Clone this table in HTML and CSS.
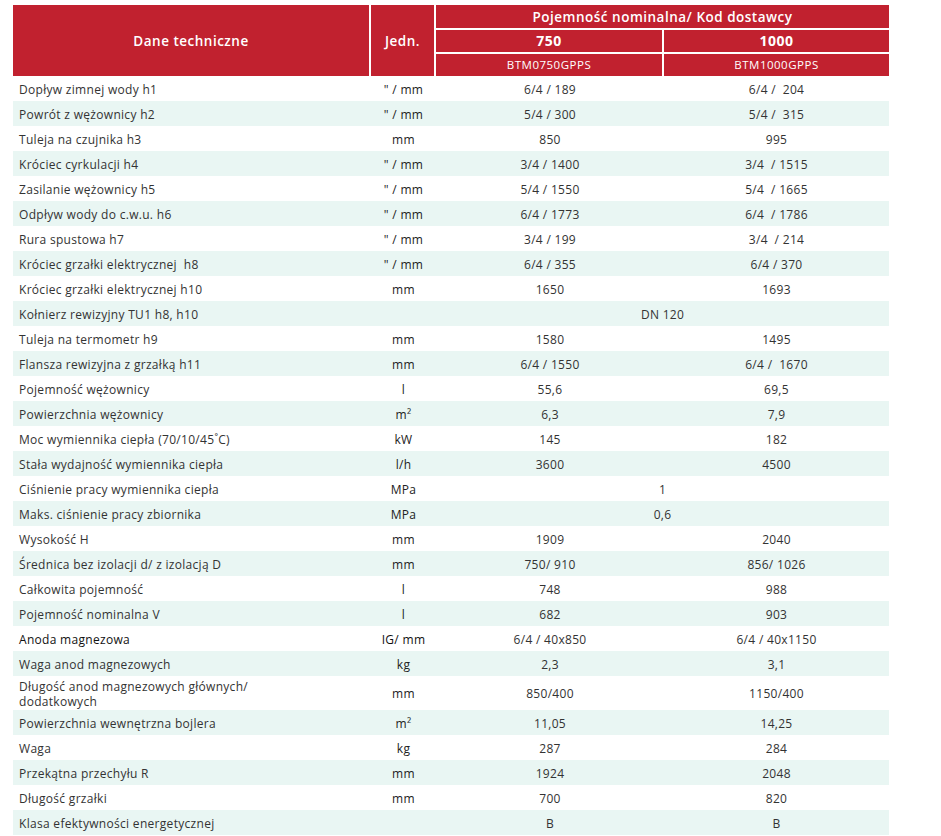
FILE: index.html
```html
<!DOCTYPE html>
<html lang="pl">
<head>
<meta charset="utf-8">
<title>Dane techniczne</title>
<link rel="stylesheet" href="styles.css">
</head>
<body>
<table class="spec">
  <colgroup>
    <col class="c-name">
    <col class="c-unit">
    <col class="c-val">
    <col class="c-val2">
  </colgroup>
  <thead>
    <tr class="h1">
      <th rowspan="3" class="hname bl">Dane techniczne</th>
      <th rowspan="3" class="hunit bl">Jedn.</th>
      <th colspan="2" class="htop bb">Pojemność nominalna/ Kod dostawcy</th>
    </tr>
    <tr class="h2">
      <th class="hcap bl bb">750</th>
      <th class="hcap bb">1000</th>
    </tr>
    <tr class="h3">
      <th class="hcode bl">BTM0750GPPS</th>
      <th class="hcode">BTM1000GPPS</th>
    </tr>
  </thead>
  <tbody>
    <tr><td class="name">Dopływ zimnej wody h1</td><td class="unit">" / mm</td><td>6/4 / 189</td><td>6/4 /&nbsp; 204</td></tr>
    <tr><td class="name">Powrót z wężownicy h2</td><td class="unit">" / mm</td><td>5/4 / 300</td><td>5/4 /&nbsp; 315</td></tr>
    <tr><td class="name">Tuleja na czujnika h3</td><td class="unit">mm</td><td>850</td><td>995</td></tr>
    <tr><td class="name">Króciec cyrkulacji h4</td><td class="unit">" / mm</td><td>3/4 / 1400</td><td>3/4 &nbsp;/ 1515</td></tr>
    <tr><td class="name">Zasilanie wężownicy h5</td><td class="unit">" / mm</td><td>5/4 / 1550</td><td>5/4 &nbsp;/ 1665</td></tr>
    <tr><td class="name">Odpływ wody do c.w.u. h6</td><td class="unit">" / mm</td><td>6/4 / 1773</td><td>6/4 &nbsp;/ 1786</td></tr>
    <tr><td class="name">Rura spustowa h7</td><td class="unit">" / mm</td><td>3/4 / 199</td><td>3/4 &nbsp;/ 214</td></tr>
    <tr><td class="name">Króciec grzałki elektrycznej &nbsp;h8</td><td class="unit">" / mm</td><td>6/4 / 355</td><td>6/4 / 370</td></tr>
    <tr><td class="name">Króciec grzałki elektrycznej h10</td><td class="unit">mm</td><td>1650</td><td>1693</td></tr>
    <tr><td class="name">Kołnierz rewizyjny TU1 h8, h10</td><td class="unit"></td><td colspan="2">DN 120</td></tr>
    <tr><td class="name">Tuleja na termometr h9</td><td class="unit">mm</td><td>1580</td><td>1495</td></tr>
    <tr><td class="name">Flansza rewizyjna z grzałką h11</td><td class="unit">mm</td><td>6/4 / 1550</td><td>6/4 /&nbsp; 1670</td></tr>
    <tr><td class="name">Pojemność wężownicy</td><td class="unit">l</td><td>55,6</td><td>69,5</td></tr>
    <tr><td class="name">Powierzchnia wężownicy</td><td class="unit">m²</td><td>6,3</td><td>7,9</td></tr>
    <tr><td class="name">Moc wymiennika ciepła (70/10/45˚C)</td><td class="unit">kW</td><td>145</td><td>182</td></tr>
    <tr><td class="name">Stała wydajność wymiennika ciepła</td><td class="unit">l/h</td><td>3600</td><td>4500</td></tr>
    <tr><td class="name">Ciśnienie pracy wymiennika ciepła</td><td class="unit">MPa</td><td colspan="2">1</td></tr>
    <tr><td class="name">Maks. ciśnienie pracy zbiornika</td><td class="unit">MPa</td><td colspan="2">0,6</td></tr>
    <tr><td class="name">Wysokość H</td><td class="unit">mm</td><td>1909</td><td>2040</td></tr>
    <tr><td class="name">Średnica bez izolacji d/ z izolacją D</td><td class="unit">mm</td><td>750/ 910</td><td>856/ 1026</td></tr>
    <tr><td class="name">Całkowita pojemność</td><td class="unit">l</td><td>748</td><td>988</td></tr>
    <tr><td class="name">Pojemność nominalna V</td><td class="unit">l</td><td>682</td><td>903</td></tr>
    <tr><td class="name dark">Anoda magnezowa</td><td class="unit dark">IG/ mm</td><td>6/4 / 40x850</td><td>6/4 / 40x1150</td></tr>
    <tr><td class="name">Waga anod magnezowych</td><td class="unit">kg</td><td>2,3</td><td>3,1</td></tr>
    <tr class="tall"><td class="name">Długość anod magnezowych głównych/<br>dodatkowych</td><td class="unit">mm</td><td>850/400</td><td>1150/400</td></tr>
    <tr><td class="name">Powierzchnia wewnętrzna bojlera</td><td class="unit">m²</td><td>11,05</td><td>14,25</td></tr>
    <tr><td class="name">Waga</td><td class="unit">kg</td><td>287</td><td>284</td></tr>
    <tr><td class="name">Przekątna przechyłu R</td><td class="unit">mm</td><td>1924</td><td>2048</td></tr>
    <tr><td class="name">Długość grzałki</td><td class="unit">mm</td><td>700</td><td>820</td></tr>
    <tr><td class="name">Klasa efektywności energetycznej</td><td class="unit"></td><td>B</td><td>B</td></tr>
  </tbody>
</table>
</body>
</html>
```

FILE: styles.css
```css
html, body {
  margin: 0;
  padding: 0;
  background: #ffffff;
}

body {
  padding: 5px 0 0 13px;
  font-family: "Open Sans", "DejaVu Sans", sans-serif;
  color: #333333;
}

.spec {
  width: 876px;
  table-layout: fixed;
  border-collapse: separate;
  border-spacing: 0;
}

.c-name { width: 358px; }
.c-unit { width: 65px; }
.c-val { width: 228px; }
.c-val2 { width: 225px; }

.spec th {
  background: #c1212f;
  color: #ffffff;
  padding: 0;
  text-align: center;
  box-sizing: border-box;
  line-height: 16px;
}

.spec .bl { border-right: 2px solid #ffffff; }
.spec .bb { border-bottom: 2px solid #ffffff; }

.h1 th { height: 25px; }
.h2 th { height: 24px; }
.h3 th { height: 22px; }

.hname, .hunit {
  font-size: 13.5px;
  font-weight: 600;
  letter-spacing: 0.5px;
  padding-top: 5px;
}

.htop {
  font-size: 13.5px;
  font-weight: 600;
  letter-spacing: 0.5px;
}

.hcap {
  font-size: 14px;
  font-weight: 700;
  letter-spacing: 0.5px;
  padding-top: 2px;
}

.hcode {
  font-size: 11.5px;
  font-weight: 400;
  letter-spacing: 0.5px;
  padding-top: 2px;
}

.spec td {
  height: 25px;
  padding: 2px 0 0 0;
  font-size: 12px;
  letter-spacing: 0.3px;
  text-align: center;
  vertical-align: middle;
  box-sizing: border-box;
  line-height: 14px;
}

.spec tbody tr:nth-child(even) td {
  background: #e9f6f3;
}

.spec td.name {
  text-align: left;
  padding-left: 6px;
}

.spec td.unit {
  font-weight: 500;
  color: #222222;
}

.spec td.dark {
  color: #111111;
}

.spec tr.tall td {
  height: 34px;
  line-height: 15px;
  padding-top: 1px;
}
```
